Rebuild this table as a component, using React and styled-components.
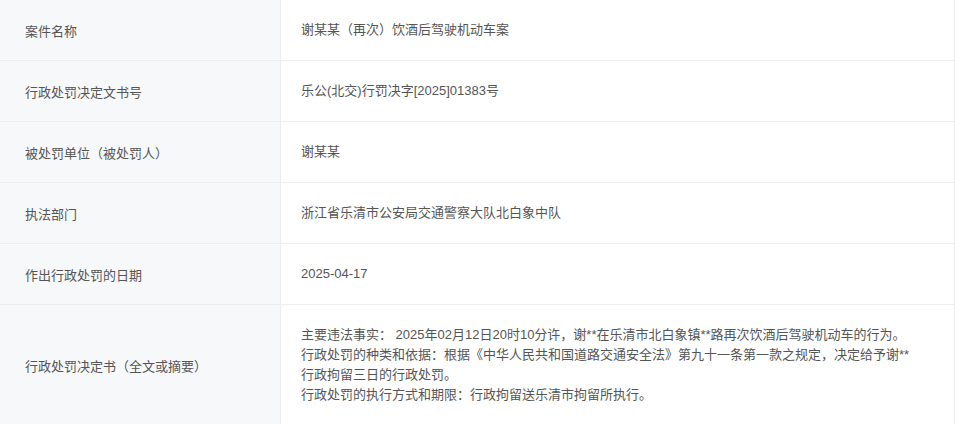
import React from "react";
import styled, { createGlobalStyle } from "styled-components";

const GlobalStyle = createGlobalStyle`
  html, body {
    margin: 0;
    padding: 0;
    background: #fff;
  }
  body {
    font-family: "Liberation Sans", "Noto Sans CJK SC", sans-serif;
    color: #555;
  }
`;

const Table = styled.table`
  width: 955px;
  border-collapse: collapse;
  table-layout: fixed;
  font-size: 13px;
  border-right: 1px solid #eee;
`;

const Row = styled.tr`
  border-bottom: 1px solid #eee;
  &:last-child {
    border-bottom: none;
  }
`;

const Label = styled.td`
  width: 255px;
  padding: 0 0 0 25px;
  height: ${({ $tall }) => ($tall ? "120px" : "60px")};
  background: #f7f8fa;
  border-right: 1px solid #eee;
  color: #555;
  vertical-align: middle;
`;

const Value = styled.td`
  padding: ${({ $tall }) => ($tall ? "20px 20px" : "0 20px")};
  color: #555;
  line-height: 20px;
  vertical-align: middle;
`;

const Line = styled.div`
  white-space: nowrap;
`;

const rows = [
  ["案件名称", "谢某某（再次）饮酒后驾驶机动车案"],
  ["行政处罚决定文书号", "乐公(北交)行罚决字[2025]01383号"],
  ["被处罚单位（被处罚人）", "谢某某"],
  ["执法部门", "浙江省乐清市公安局交通警察大队北白象中队"],
  ["作出行政处罚的日期", "2025-04-17"],
];

const detail = [
  "主要违法事实： 2025年02月12日20时10分许，谢**在乐清市北白象镇**路再次饮酒后驾驶机动车的行为。",
  "行政处罚的种类和依据：根据《中华人民共和国道路交通安全法》第九十一条第一款之规定，决定给予谢**",
  "行政拘留三日的行政处罚。",
  "行政处罚的执行方式和期限：行政拘留送乐清市拘留所执行。",
];

const App = () => (
  <>
    <GlobalStyle />
    <Table>
      <tbody>
        {rows.map(([k, v]) => (
          <Row key={k}>
            <Label>{k}</Label>
            <Value>{v}</Value>
          </Row>
        ))}
        <Row>
          <Label $tall>行政处罚决定书（全文或摘要）</Label>
          <Value $tall>
            {detail.map((l) => (
              <Line key={l}>{l}</Line>
            ))}
          </Value>
        </Row>
      </tbody>
    </Table>
  </>
);

export default App;
